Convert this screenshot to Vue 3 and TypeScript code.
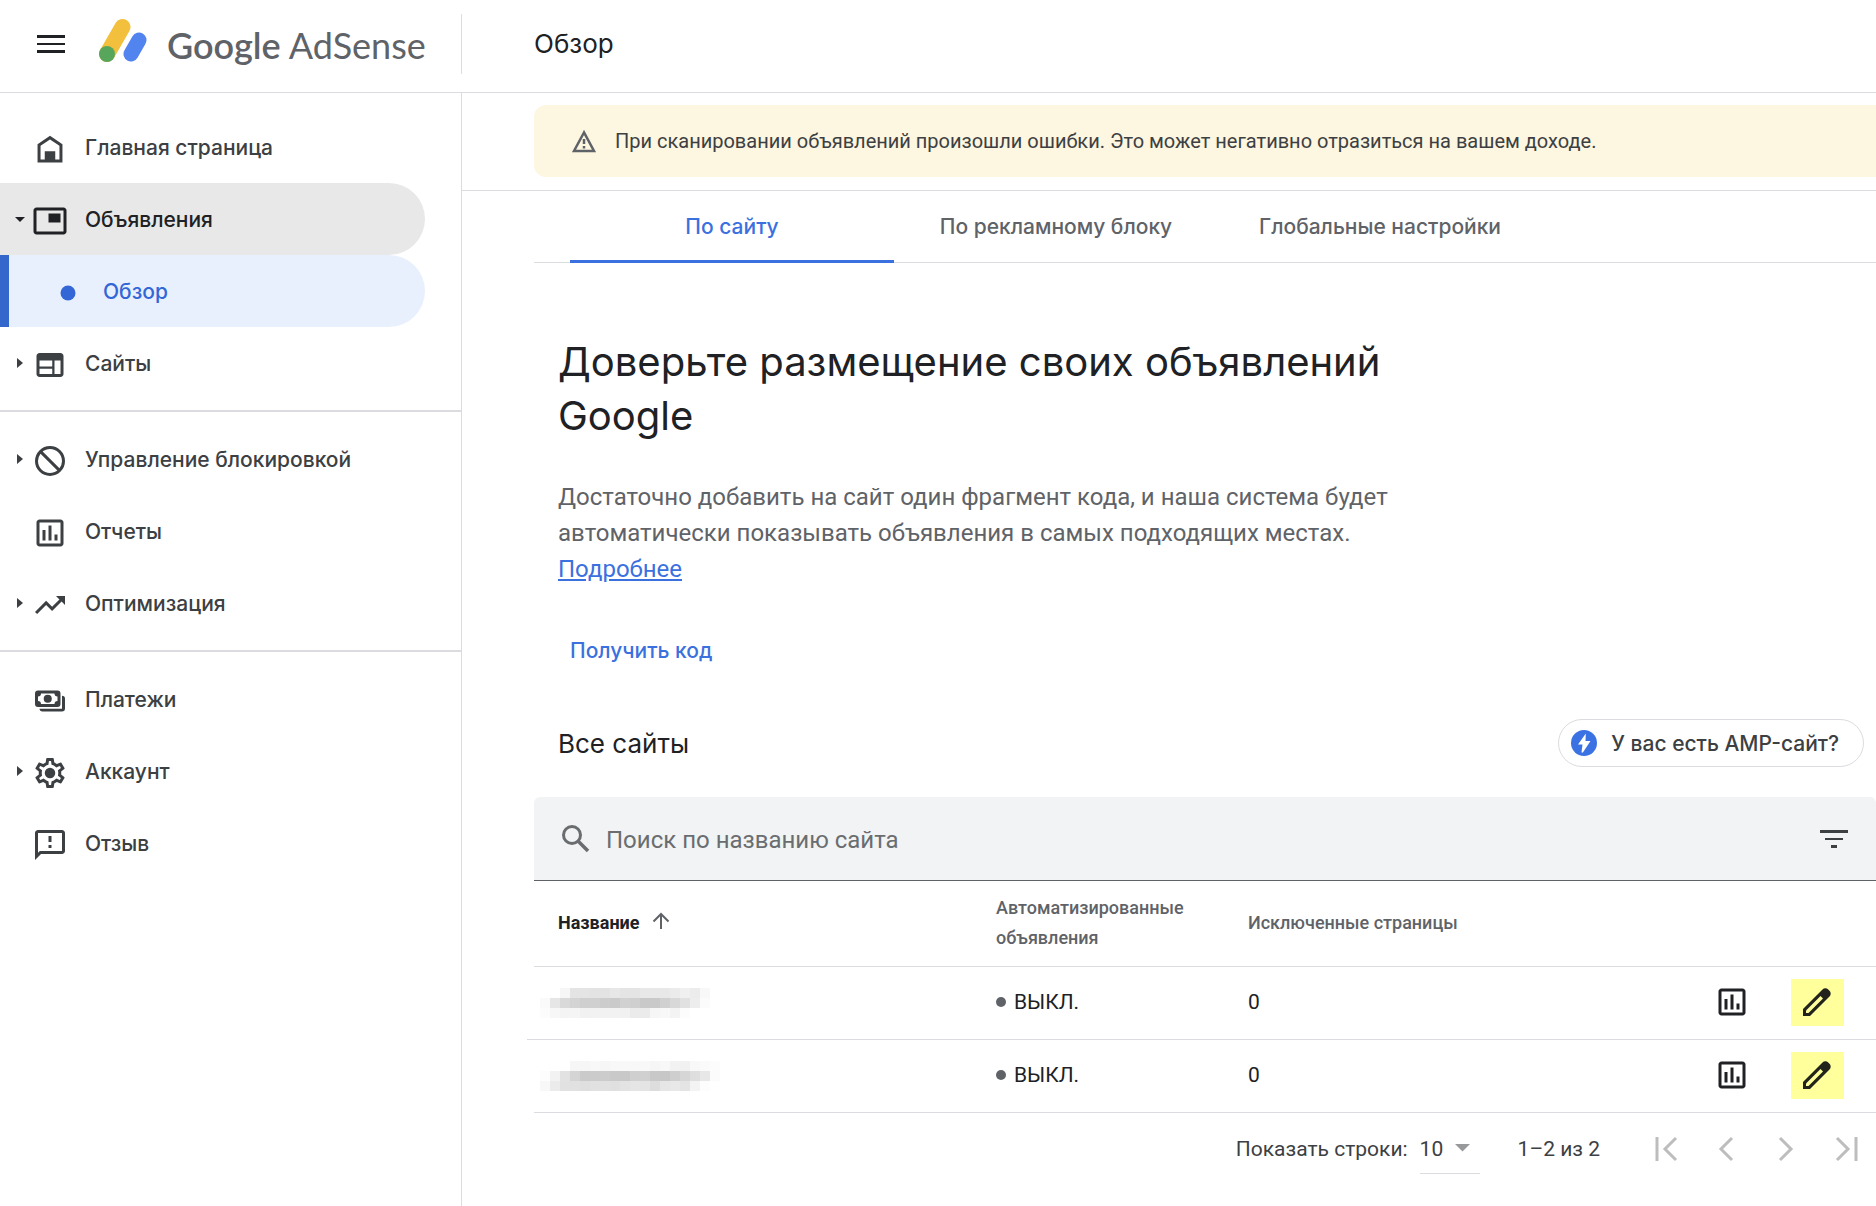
<script setup lang="ts">
import { ref } from 'vue'

interface NavItem {
  label: string
  icon: string
  arrow?: 'right' | 'down'
  state?: 'open' | 'current'
}

const groups: NavItem[][] = [
  [
    { label: 'Главная страница', icon: 'home' },
    { label: 'Объявления', icon: 'ads', arrow: 'down', state: 'open' },
    { label: 'Обзор', icon: 'dot', state: 'current' },
    { label: 'Сайты', icon: 'sites', arrow: 'right' },
  ],
  [
    { label: 'Управление блокировкой', icon: 'block', arrow: 'right' },
    { label: 'Отчеты', icon: 'chart' },
    { label: 'Оптимизация', icon: 'trend', arrow: 'right' },
  ],
  [
    { label: 'Платежи', icon: 'payments' },
    { label: 'Аккаунт', icon: 'gear', arrow: 'right' },
    { label: 'Отзыв', icon: 'feedback' },
  ],
]

const gear =
  'M19.43 12.98c.04-.32.07-.64.07-.98 0-.34-.03-.66-.07-.98l2.11-1.65c.19-.15.24-.42.12-.64l-2-3.46c-.09-.16-.26-.25-.44-.25-.06 0-.12.01-.17.03l-2.49 1c-.52-.4-1.08-.73-1.69-.98l-.38-2.65C14.46 2.18 14.25 2 14 2h-4c-.25 0-.46.18-.49.42l-.38 2.65c-.61.25-1.17.59-1.69.98l-2.49-1c-.06-.02-.12-.03-.18-.03-.17 0-.34.09-.43.25l-2 3.46c-.13.22-.07.49.12.64l2.11 1.65c-.04.32-.07.65-.07.98 0 .33.03.66.07.98l-2.11 1.65c-.19.15-.24.42-.12.64l2 3.46c.09.16.26.25.44.25.06 0 .12-.01.17-.03l2.49-1c.52.4 1.08.73 1.69.98l.38 2.65c.03.24.24.42.49.42h4c.25 0 .46-.18.49-.42l.38-2.65c.61-.25 1.17-.59 1.69-.98l2.49 1c.06.02.12.03.18.03.17 0 .34-.09.43-.25l2-3.46c.12-.22.07-.49-.12-.64l-2.11-1.65zm-1.98-1.71c.04.31.05.52.05.73 0 .21-.02.43-.05.73l-.14 1.13.89.7 1.08.84-.7 1.21-1.27-.51-1.04-.42-.9.68c-.43.32-.84.56-1.25.73l-1.06.43-.16 1.13-.2 1.35h-1.4l-.19-1.35-.16-1.13-1.06-.43c-.43-.18-.83-.41-1.23-.71l-.91-.7-1.06.43-1.27.51-.7-1.21 1.08-.84.89-.7-.14-1.13c-.03-.31-.05-.54-.05-.74s.02-.43.05-.73l.14-1.13-.89-.7-1.08-.84.7-1.21 1.27.51 1.04.42.9-.68c.43-.32.84-.56 1.25-.73l1.06-.43.16-1.13.2-1.35h1.39l.19 1.35.16 1.13 1.06.43c.43.18.83.41 1.23.71l.91.7 1.06-.43 1.27-.51.7 1.21-1.07.85-.89.7.14 1.13z'

const icons: Record<string, string> = {
  home: 'M12 3.2l8.3 5.6V21H3.7V8.8zM5.7 9.9V19h2.8v-5.5h7V19h2.8V9.9L12 5.6z',
  ads: 'M21 3H3c-1.1 0-2 .9-2 2v14c0 1.1.9 2 2 2h18c1.1 0 2-.9 2-2V5c0-1.1-.9-2-2-2zm0 16H3V5h18v14zM11 7h8v6h-8z',
  sites: 'M19 4H5c-1.1 0-2 .9-2 2v12c0 1.1.9 2 2 2h14c1.1 0 2-.9 2-2V6c0-1.1-.9-2-2-2zM13.5 18H5v-3.5h8.5zm0-5H5V9h8.5zM19 18h-4V9h4z',
  block: 'M12 2a10 10 0 1 0 0 20 10 10 0 0 0 0-20zM20 12c0-4.42-3.58-8-8-8-1.85 0-3.55.63-4.9 1.69L18.31 16.9A7.9 7.9 0 0 0 20 12zM12 20c1.85 0 3.55-.63 4.9-1.69L5.69 7.1A7.9 7.9 0 0 0 4 12c0 4.42 3.58 8 8 8z',
  chart: 'M19 3H5c-1.1 0-2 .9-2 2v14c0 1.1.9 2 2 2h14c1.1 0 2-.9 2-2V5c0-1.1-.9-2-2-2zm0 16H5V5h14v14zM7 10h2v7H7zM11 7h2v10h-2zM15 13h2v4h-2z',
  trend: 'M16 6l2.29 2.29-4.88 4.88-4-4L2 16.59 3.41 18l6-6 4 4 6.3-6.29L22 12V6z',
  payments: 'M17 5H4a2 2 0 0 0-2 2v7a2 2 0 0 0 2 2h13a2 2 0 0 0 2-2V7a2 2 0 0 0-2-2zm0 7a2 2 0 0 0-2 2H6a2 2 0 0 0-2-2V9a2 2 0 0 0 2-2h9a2 2 0 0 0 2 2zM10.5 7.8a2.7 2.7 0 1 0 0 5.4 2.7 2.7 0 0 0 0-5.4zM20 8.5a2 2 0 0 1 2 2V17a2 2 0 0 1-2 2H7a2 2 0 0 1-2-1.8h15z',
  gear,
  feedback: 'M20 2H4c-1.1 0-2 .9-2 2v18l4-4h14c1.1 0 2-.9 2-2V4c0-1.1-.9-2-2-2zm0 14H5.2L4 17.2V4h16zM11 6h2v4h-2zM11 12h2v2h-2z',
}

const tabs = ['По сайту', 'По рекламному блоку', 'Глобальные настройки']
const activeTab = ref(0)
const query = ref('')
const pageSize = ref('10')

// Each obscured name is a mosaic of grey cells, one hex pair per cell.
const rows = [
  {
    mosaic: [
      'fffff6e4e4e3e3e7e4e4e8e8e8ebf0ecf8ff',
      'fae6d9d4cfd0cccad1cfc9c9d0d8e1edfbff',
      'fcf7f4f5f1f2f2f2f1ebebf6f8f3fcffffff',
    ],
    state: 'ВЫКЛ.',
    excluded: 0,
  },
  {
    mosaic: [
      'fffffff6f6f8f6f8f8f8f8f6f8f2f1f8fafc',
      'fdf2e2d4cacbccc9c8cfd0c8c7ced6dee7fb',
      'f8ebe1e1dfe1e1e0e3e5e4dde6e8e4f3fdff',
    ],
    state: 'ВЫКЛ.',
    excluded: 0,
  },
]

function cells(line: string): string[] {
  return (line.match(/../g) ?? []).map((v) => `#${v}${v}${v}`)
}

const pager = [
  { label: 'Первая страница', d: 'M9 6v24M28 7L17 18l11 11' },
  { label: 'Предыдущая страница', d: 'M24 7L13 18l11 11' },
  { label: 'Следующая страница', d: 'M12 7l11 11-11 11' },
  { label: 'Последняя страница', d: 'M9 7l11 11L9 29M28 6v24' },
]
</script>

<template>
  <div class="page">
    <header class="topbar">
      <div class="brand">
        <button class="plain menu" type="button" aria-label="Меню">
          <svg width="36" height="36" viewBox="0 0 36 36"><path d="M4 9h28v3H4zM4 17h28v2H4zM4 24h28v3H4z" fill="#202124" /></svg>
        </button>
        <a class="logo" href="#">
          <svg width="50" height="46" viewBox="0 0 50 46" fill="none" stroke-linecap="round" aria-hidden="true">
            <path d="M23.5 9L8 36" stroke="#f2c03c" stroke-width="16" />
            <path d="M40 22L32 36" stroke="#5284f0" stroke-width="15" />
            <circle cx="8" cy="36" r="8" fill="#58a55c" />
          </svg>
          <span class="wordmark"><b>Google</b> AdSense</span>
        </a>
      </div>
      <h1>Обзор</h1>
    </header>

    <div class="body">
      <nav class="side">
        <ul v-for="(group, g) in groups" :key="g">
          <li v-for="item in group" :key="item.label">
            <a href="#" class="nav" :class="item.state">
              <span class="arrow">
                <svg v-if="item.arrow === 'right'" width="12" height="12" viewBox="0 0 12 12"><path d="M3 1l6 5-6 5z" fill="currentColor" /></svg>
                <svg v-if="item.arrow === 'down'" width="12" height="12" viewBox="0 0 12 12"><path d="M1 4h10L6 9z" fill="currentColor" /></svg>
              </span>
              <svg class="glyph" width="36" height="36" viewBox="0 0 24 24" fill="currentColor" fill-rule="evenodd">
                <circle v-if="item.icon === 'dot'" cx="12" cy="12" r="5" />
                <path v-else :d="icons[item.icon]" />
                <circle v-if="item.icon === 'gear'" cx="12" cy="12" r="3.5" />
              </svg>
              <span>{{ item.label }}</span>
            </a>
          </li>
        </ul>
      </nav>

      <main>
        <section class="notice">
          <div class="banner" role="alert">
            <svg width="26" height="26" viewBox="0 0 26 26" fill="none" stroke="#5f6368">
              <path d="M13 4.5L3 23h20z" stroke-width="2.5" />
              <path d="M13 11v5M13 18v2.5" stroke-width="2.5" />
            </svg>
            <span>При сканировании объявлений произошли ошибки. Это может негативно отразиться на вашем доходе.</span>
          </div>
        </section>

        <div class="tabs" role="tablist">
          <button
            v-for="(tab, i) in tabs"
            :key="tab"
            type="button"
            role="tab"
            :aria-selected="i === activeTab"
            :class="{ on: i === activeTab }"
            @click="activeTab = i"
          >
            {{ tab }}
          </button>
        </div>

        <section class="intro">
          <h2>Доверьте размещение своих объявлений Google</h2>
          <p>
            Достаточно добавить на сайт один фрагмент кода, и наша система будет автоматически показывать объявления в
            самых подходящих местах. <a href="#">Подробнее</a>
          </p>
          <button class="plain code" type="button">Получить код</button>
        </section>

        <section class="sites">
          <div class="sites-head">
            <h3>Все сайты</h3>
            <button class="amp" type="button">
              <svg width="26" height="26" viewBox="0 0 26 26" aria-hidden="true">
                <circle cx="13" cy="13" r="13" fill="#3b72e3" />
                <path d="M14.8 3.5L7 14.5h4.5L10.5 22.5h1.4L19.5 11h-5z" fill="#fff" />
              </svg>
              <span>У вас есть AMP-сайт?</span>
            </button>
          </div>

          <div class="search">
            <svg width="36" height="36" viewBox="0 0 36 36" fill="none" stroke="#6a6d70" stroke-width="3" aria-hidden="true">
              <circle cx="14" cy="14" r="8.5" />
              <path d="M20 20l10 10" stroke-width="3.5" />
            </svg>
            <input v-model="query" type="text" placeholder="Поиск по названию сайта" aria-label="Поиск по названию сайта" />
            <button class="plain" type="button" aria-label="Фильтр">
              <svg width="36" height="36" viewBox="0 0 36 36"><path d="M4 9h28v3H4zM9 17h18v2H9zM15 24h6v3h-6z" fill="#3c4043" /></svg>
            </button>
          </div>

          <table>
            <colgroup>
              <col class="c-name" />
              <col class="c-auto" />
              <col class="c-excl" />
              <col />
            </colgroup>
            <thead>
              <tr>
                <th class="sorted" scope="col">
                  <span class="sort">
                    Название
                    <svg width="18" height="18" viewBox="0 0 18 18" fill="none" stroke="#5f6368" stroke-width="2"><path d="M9 17V2M1.5 9.500L9 2l7.5 7.5" /></svg>
                  </span>
                </th>
                <th scope="col">Автоматизированные объявления</th>
                <th scope="col">Исключенные страницы</th>
                <td></td>
              </tr>
            </thead>
            <tbody>
              <tr v-for="(row, r) in rows" :key="r">
                <td class="name">
                  <span class="mosaic">
                    <span v-for="(line, l) in row.mosaic" :key="l" class="mosaic-line">
                      <i v-for="(c, k) in cells(line)" :key="k" :style="{ background: c }"></i>
                    </span>
                  </span>
                </td>
                <td><span class="status"><i></i>{{ row.state }}</span></td>
                <td>{{ row.excluded }}</td>
                <td>
                  <span class="actions">
                    <button class="plain" type="button" aria-label="Отчет">
                      <svg width="36" height="36" viewBox="0 0 24 24" fill="#202124" fill-rule="evenodd"><path :d="icons.chart" /></svg>
                    </button>
                    <button class="plain edit" type="button" aria-label="Изменить">
                      <svg width="36" height="36" viewBox="0 0 36 36">
                        <path d="M3 32v-7L22.5 5.5a4 4 0 0 1 5.7 0l1.3 1.3a4 4 0 0 1 0 5.7L10 32z" fill="#22231c" />
                        <path d="M6 29v-2.5L20.5 12l2.5 2.5L8.5 29z" fill="#ffff9c" />
                      </svg>
                    </button>
                  </span>
                </td>
              </tr>
            </tbody>
          </table>

          <footer class="pager">
            <label for="page-size">Показать строки:</label>
            <span class="size">
              <select id="page-size" v-model="pageSize">
                <option>10</option>
                <option>25</option>
                <option>50</option>
              </select>
              <svg width="16" height="8" viewBox="0 0 16 8" aria-hidden="true"><path d="M0 0h15L7.5 7.5z" fill="#97999b" /></svg>
            </span>
            <span class="range">1–2 из 2</span>
            <span class="steps">
              <button v-for="p in pager" :key="p.label" class="plain" type="button" :aria-label="p.label">
                <svg width="36" height="36" viewBox="0 0 36 36" fill="none" stroke="#bdbdbd" stroke-width="3"><path :d="p.d" /></svg>
              </button>
            </span>
          </footer>
        </section>
      </main>
    </div>
  </div>
</template>

<style>
body {
  background: #fff;
}
</style>

<style scoped>
.page {
  --display: Inter, 'Open Sans', sans-serif;
  --line: #dadce0;
  --blue: #3b70df;
  display: flex;
  flex-direction: column;
  min-height: 100vh;
  overflow-x: hidden;
  font-family: Roboto, 'Liberation Sans', sans-serif;
  font-size: 21px;
  color: #202124;
}
*,
*::before,
*::after {
  box-sizing: border-box;
}
svg {
  display: block;
  flex: none;
}
h1,
h2,
h3,
p,
ul {
  margin: 0;
  padding: 0;
  font-weight: 400;
}
button,
input,
select {
  font: inherit;
  color: inherit;
}
.plain {
  border: 0;
  padding: 0;
  background: none;
  cursor: pointer;
}
.topbar {
  display: flex;
  height: 93px;
  padding: 14px 0 18px;
  border-bottom: 1px solid var(--line);
}
.brand {
  display: flex;
  align-items: flex-start;
  width: 462px;
  height: 60px;
  padding-left: 33px;
  border-right: 1px solid var(--line);
}
.menu {
  margin: 12px 30px 0 0;
}
.logo {
  display: flex;
  gap: 18px;
  padding-top: 4px;
  color: #5f6368;
  text-decoration: none;
}
.wordmark {
  font-family: Lato, 'Open Sans', sans-serif;
  font-size: 36px;
  line-height: 54px;
  white-space: nowrap;
}
.wordmark b {
  font-weight: 600;
}
h1 {
  padding-left: 72px;
  font-family: var(--display);
  font-size: 26px;
  line-height: 60px;
}
.body {
  display: flex;
  flex: 1;
}
.side {
  width: 462px;
  flex: none;
  padding-top: 7px;
  border-right: 1px solid var(--line);
}
ul {
  list-style: none;
  padding: 11px 0;
}
ul + ul {
  border-top: 2px solid var(--line);
}
.nav {
  display: flex;
  align-items: center;
  height: 72px;
  width: 425px;
  border-radius: 0 36px 36px 0;
  font-family: var(--display);
  font-weight: 500;
  color: #3c4043;
  text-decoration: none;
  white-space: nowrap;
}
.arrow {
  width: 32px;
  padding-left: 14px;
}
.glyph {
  margin: 4px 17px 0 0;
}
.nav.open {
  background: #e8e8e8;
  color: #202124;
}
.nav.current {
  background: #e8f0fe;
  border-left: 9px solid #3367cc;
  color: #3367d6;
}
.current .arrow {
  width: 41px;
}
main {
  flex: 1;
  min-width: 0;
}
.notice {
  padding: 12px 0 13px 72px;
  border-bottom: 1px solid var(--line);
}
.banner {
  display: flex;
  align-items: center;
  gap: 18px;
  height: 72px;
  padding-left: 37px;
  border-radius: 12px 0 0 12px;
  background: #fdf6e0;
  font-size: 20px;
  color: #3c4043;
}
.tabs {
  display: flex;
  margin-left: 72px;
  padding-left: 36px;
  border-bottom: 1px solid var(--line);
}
.tabs button {
  width: 324px;
  height: 72px;
  margin-bottom: -1px;
  border: 0;
  border-bottom: 3px solid transparent;
  padding: 2px 0 0;
  background: none;
  font-family: var(--display);
  font-weight: 500;
  color: #5f6368;
  cursor: pointer;
}
.tabs .on {
  border-color: var(--blue);
  color: var(--blue);
}
.intro {
  width: 960px;
  padding: 72px 0 0 96px;
}
h2 {
  font-family: var(--display);
  font-size: 40px;
  line-height: 54px;
}
.intro p {
  margin-top: 36px;
  font-size: 24px;
  line-height: 36px;
  color: #5f6368;
}
.intro a {
  color: var(--blue);
}
.code {
  height: 54px;
  margin-top: 36px;
  padding: 0 12px;
  font-family: var(--display);
  font-weight: 500;
  color: var(--blue);
}
.sites {
  padding: 42px 0 0 72px;
}
.sites-head {
  display: flex;
  align-items: center;
  justify-content: space-between;
  padding: 0 12px 0 24px;
}
h3 {
  font-family: var(--display);
  font-size: 26px;
}
.amp {
  display: flex;
  align-items: center;
  gap: 14px;
  height: 48px;
  padding: 0 24px 0 12px;
  border: 1px solid var(--line);
  border-radius: 24px;
  background: #fff;
  font-family: var(--display);
  font-weight: 500;
  color: #3c4043;
}
.search {
  display: flex;
  align-items: center;
  height: 84px;
  margin-top: 30px;
  padding: 0 24px;
  border-bottom: 1px solid #5f6368;
  border-radius: 6px 6px 0 0;
  background: #f1f3f4;
}
.search input {
  flex: 1;
  min-width: 0;
  margin-left: 12px;
  border: 0;
  padding: 2px 0 0;
  outline: 0;
  background: none;
  font-size: 24px;
}
.search input::placeholder {
  color: #6a6d70;
  opacity: 1;
}
table {
  width: 100%;
  table-layout: fixed;
  border-collapse: separate;
  border-spacing: 0;
}
.c-name {
  width: 438px;
}
.c-auto,
.c-excl {
  width: 252px;
}
th,
td {
  padding: 0 0 2px 24px;
  border-bottom: 1px solid var(--line);
  text-align: left;
}
th {
  height: 86px;
  font-size: 18px;
  line-height: 30px;
  font-weight: 500;
  color: #5f6368;
}
th.sorted {
  font-weight: 700;
  color: #202124;
}
.sort {
  display: flex;
  align-items: center;
  gap: 12px;
}
.sort svg {
  margin-bottom: 4px;
}
tbody td {
  height: 73px;
}
td.name {
  position: relative;
  padding: 0 0 0 6px;
}
/* The rule between the rows reaches a little into the gutter. */
tr:first-child .name::after {
  content: '';
  position: absolute;
  left: -7px;
  bottom: -1px;
  width: 7px;
  height: 1px;
  background: var(--line);
}
.mosaic-line {
  display: flex;
}
.mosaic-line i {
  width: 10px;
  height: 10px;
}
.status {
  display: flex;
  align-items: center;
  gap: 8px;
}
.status i {
  width: 10px;
  height: 10px;
  border-radius: 50%;
  background: #5f6368;
}
.actions {
  display: flex;
  align-items: center;
  justify-content: flex-end;
  gap: 41px;
  padding-right: 32px;
}
.edit {
  display: flex;
  align-items: center;
  justify-content: center;
  width: 53px;
  height: 47px;
  background: #ffff9c;
}
.pager {
  display: flex;
  align-items: center;
  justify-content: flex-end;
  height: 72px;
  padding-right: 12px;
  color: #3c4043;
}
.size {
  position: relative;
  width: 60px;
  margin: 0 38px 0 12px;
}
.size select {
  appearance: none;
  width: 60px;
  height: 50px;
  border: 0;
  border-bottom: 1px solid var(--line);
  border-radius: 0;
  padding: 0;
  background: none;
}
.size svg {
  position: absolute;
  right: 9px;
  top: 20px;
  pointer-events: none;
}
.steps {
  display: flex;
  gap: 24px;
  margin-left: 48px;
}
</style>
